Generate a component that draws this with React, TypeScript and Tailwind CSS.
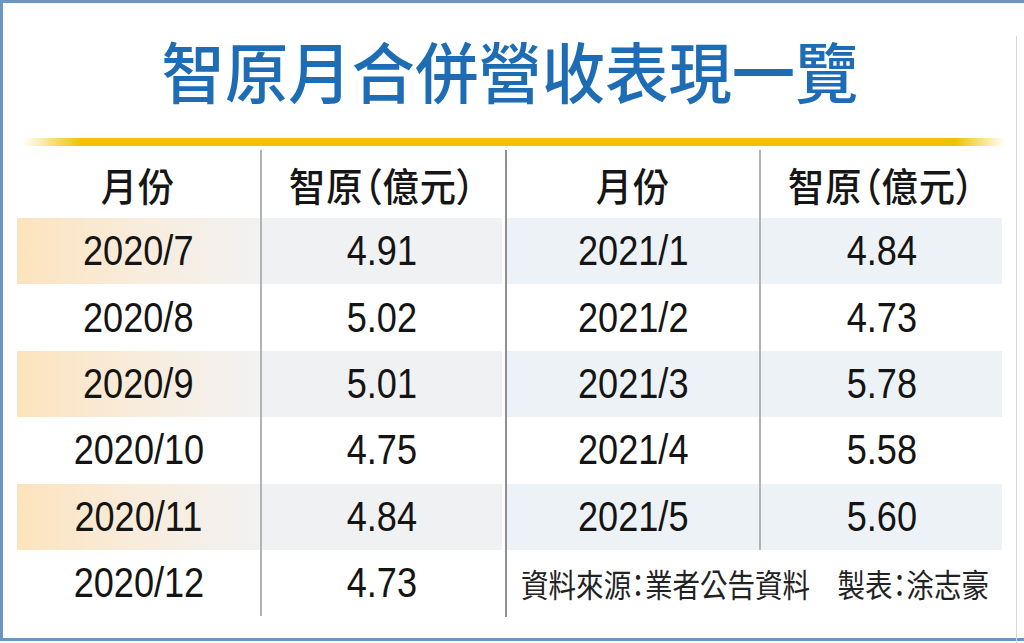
import React from 'react';

const left = [
    ['2020/7', '4.91'],
    ['2020/8', '5.02'],
    ['2020/9', '5.01'],
    ['2020/10', '4.75'],
    ['2020/11', '4.84'],
    ['2020/12', '4.73'],
];

const right = [
    ['2021/1', '4.84'],
    ['2021/2', '4.73'],
    ['2021/3', '5.78'],
    ['2021/4', '5.58'],
    ['2021/5', '5.60'],
];

const cjk = "font-['Noto_Sans_CJK_TC','Noto_Sans_CJK_SC',sans-serif]";
const num = "font-['Liberation_Sans',Arial,sans-serif]";

const Num: React.FC<{ v: string }> = ({ v }) => (
    <span className={`${num} inline-block scale-x-[0.86] text-[42px] leading-none text-[#141414]`}>{v}</span>
);

// proportional punctuation ('palt') keeps the parens and colons narrow, like the print layout
const Head: React.FC<{ children: React.ReactNode }> = ({ children }) => (
    <span className={`${cjk} inline-block scale-x-[0.93] text-[39px] font-medium leading-none tracking-[1px] text-[#161616] whitespace-nowrap [font-feature-settings:'palt']`}>{children}</span>
);

const App: React.FC = () => {
    return (
        <div className="w-[1024px] h-[643px] bg-white overflow-hidden">
            <div className="w-[1024px] h-[641px] border-t-[3px] border-l-[3px] border-b-[3px] border-[#6a96c4]">
                <div className="w-[1014px] h-full border-r border-[#d3d9e0]">
                    {/* title */}
                    <div className="mt-[33px] h-[66px] flex justify-center">
                        <h1 className={`${cjk} inline-block scale-x-[0.96] text-[66px] font-medium leading-none text-[#1d6cb4]`}>
                            智原月合併營收表現一覽
                        </h1>
                    </div>

                    {/* yellow rule */}
                    <div className="mt-[36px] ml-[19px] w-[983px] h-[8px] bg-[linear-gradient(90deg,rgba(242,194,0,0)_0%,#f2c200_6%,#f2c200_95%,rgba(242,194,0,0)_100%)]" />

                    <div className="mt-[4px] ml-[14px] flex">
                        {/* left table */}
                        <div className="w-[487px]">
                            <div className="flex h-[68px]">
                                <div className="w-[245px] flex items-center justify-center border-r-2 border-[#b3b3b3]"><Head>月份</Head></div>
                                <div className="flex-1 flex items-center justify-center"><Head>智原（億元）</Head></div>
                            </div>
                            {left.map(([m, v], i) => (
                                <div key={m} className="flex h-[66.4px]">
                                    <div className={`w-[245px] flex items-center justify-center border-r-2 border-[#b3b3b3] ${i % 2 === 0 ? 'bg-linear-to-r from-[#fce3bd] via-[#f8ecdc] to-[#f2f2f2]' : ''}`}>
                                        <Num v={m} />
                                    </div>
                                    <div className={`flex-1 flex items-center justify-center mr-[2px] ${i % 2 === 0 ? 'bg-[#f0f1f2]' : ''}`}>
                                        <Num v={v} />
                                    </div>
                                </div>
                            ))}
                        </div>

                        {/* main divider */}
                        <div className="w-[2px] ml-[1px] h-[467px] bg-[#8f8f8f]" />

                        {/* right table */}
                        <div className="w-[495px]">
                            <div className="flex h-[68px]">
                                <div className="w-[254px] flex items-center justify-center border-r-2 border-[#b3b3b3]"><Head>月份</Head></div>
                                <div className="flex-1 flex items-center justify-center"><Head>智原（億元）</Head></div>
                            </div>
                            {right.map(([m, v], i) => (
                                <div key={m} className={`flex h-[66.4px] ${i % 2 === 0 ? 'bg-[#edf2f7]' : ''}`}>
                                    <div className="w-[254px] flex items-center justify-center border-r-2 border-[#b3b3b3]">
                                        <Num v={m} />
                                    </div>
                                    <div className="flex-1 flex items-center justify-center">
                                        <Num v={v} />
                                    </div>
                                </div>
                            ))}
                            <div className="h-[66.4px] flex items-center justify-center">
                                <span className={`${cjk} inline-block scale-x-[0.86] text-[32px] leading-none text-[#222] whitespace-nowrap [font-feature-settings:'palt']`}>
                                    資料來源：業者公告資料　製表：涂志豪
                                </span>
                            </div>
                        </div>
                    </div>
                </div>
            </div>
        </div>
    );
};

export default App;
